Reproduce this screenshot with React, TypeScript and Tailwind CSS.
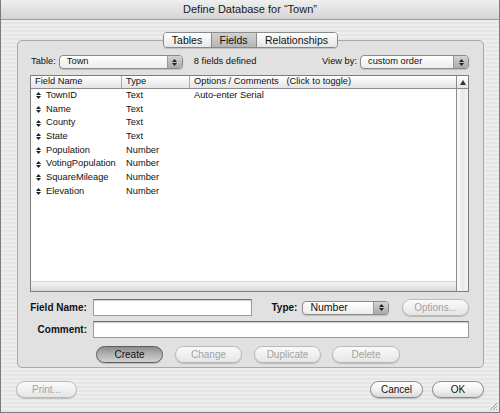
import React from 'react';

// Aqua-style "Define Database" dialog (FileMaker, Mac OS X)

const fields = [
  { name: 'TownID', type: 'Text', options: 'Auto-enter Serial' },
  { name: 'Name', type: 'Text', options: '' },
  { name: 'County', type: 'Text', options: '' },
  { name: 'State', type: 'Text', options: '' },
  { name: 'Population', type: 'Number', options: '' },
  { name: 'VotingPopulation', type: 'Number', options: '' },
  { name: 'SquareMileage', type: 'Number', options: '' },
  { name: 'Elevation', type: 'Number', options: '' },
];

function UpDown() {
  return (
    <svg width="5" height="7" viewBox="0 0 5 7" className="shrink-0">
      <polygon points="2.5,0 5,3 0,3" fill="#222" />
      <polygon points="0,4 5,4 2.5,7" fill="#222" />
    </svg>
  );
}

function Popup({ label, className, big }: { label: string; className: string; big?: boolean }) {
  return (
    <div
      className={`flex h-[14px] items-stretch overflow-hidden rounded-[4px] border border-[#8a8a8a] bg-gradient-to-b from-white to-[#ececec] shadow-[0_1px_1px_rgba(0,0,0,0.15)] ${className}`}
    >
      <div className={`flex flex-1 items-center pl-[7px] leading-none ${big ? 'text-[10.5px]' : 'text-[9.3px]'}`}>
        {label}
      </div>
      <div className="flex w-[15px] flex-col items-center justify-center gap-[1px] border-l border-[#9a9a9a] bg-gradient-to-b from-[#d4d4d4] to-[#a9a9a9]">
        <svg width="5" height="3" viewBox="0 0 5 3">
          <polygon points="2.5,0 5,3 0,3" fill="#222" />
        </svg>
        <svg width="5" height="3" viewBox="0 0 5 3">
          <polygon points="0,0 5,0 2.5,3" fill="#222" />
        </svg>
      </div>
    </div>
  );
}

function AquaButton({
  label,
  className,
  disabled,
  primary,
}: {
  label: string;
  className: string;
  disabled?: boolean;
  primary?: boolean;
}) {
  let tone =
    'border-[#8a8a8a] bg-gradient-to-b from-white via-[#f2f2f2] to-[#dadada] text-[#111]';
  if (disabled) tone = 'border-[#b9b9b9] bg-gradient-to-b from-[#fafafa] to-[#e6e6e6] text-[#a2a2a2]';
  if (primary) tone = 'border-[#5e5e5e] bg-gradient-to-b from-[#8c8c8c] via-[#b4b4b4] to-[#d0d0d0] text-[#111]';
  return (
    <div
      className={`flex h-[17px] items-center justify-center rounded-full border text-[10px] leading-none shadow-[0_1px_1px_rgba(0,0,0,0.18)] ${tone} ${className}`}
    >
      {label}
    </div>
  );
}

function TextInput({ className }: { className: string }) {
  return (
    <div
      className={`h-[17px] border border-[#9a9a9a] border-t-[#6f6f6f] bg-white shadow-[inset_0_1px_1px_rgba(0,0,0,0.2)] ${className}`}
    />
  );
}

export default function App() {
  return (
    <div className="relative flex h-[413px] w-[500px] flex-col overflow-hidden border-x border-b border-[#7a7a7a] bg-[repeating-linear-gradient(180deg,#ededed_0px,#ededed_2px,#e6e6e6_2px,#e6e6e6_4px)] font-['Liberation_Sans',Arial,sans-serif] text-[#111]">
      {/* Title bar */}
      <div className="flex h-[20px] shrink-0 items-center justify-center border-b border-[#9c9c9c] bg-gradient-to-b from-[#efefef] to-[#d4d4d4] text-[11px] leading-none text-[#1a1a1a]">
        Define Database for “Town”
      </div>

      {/* Tabs */}
      <div className="relative z-10 mt-[12px] flex h-[16px] shrink-0 justify-center">
        <div className="flex overflow-hidden rounded-[4px] border border-[#8a8a8a] text-[10.5px] leading-none shadow-[0_1px_1px_rgba(0,0,0,0.15)]">
          <div className="flex w-[47px] items-center justify-center bg-gradient-to-b from-white to-[#e6e6e6]">Tables</div>
          <div className="flex w-[46px] items-center justify-center border-x border-[#8a8a8a] bg-gradient-to-b from-[#d2d2d2] to-[#b6b6b6]">
            Fields
          </div>
          <div className="flex w-[80px] items-center justify-center bg-gradient-to-b from-white to-[#e6e6e6]">
            Relationships
          </div>
        </div>
      </div>

      {/* Group box */}
      <div className="mt-[-8px] ml-[16px] flex h-[328px] w-[467px] shrink-0 flex-col rounded-[5px] border border-[#a9a9a9] bg-[#e1e1e1] pt-[14px] pr-[14px] pl-[12px]">
        {/* Table / view by */}
        <div className="flex h-[14px] items-center text-[9.3px] leading-none">
          <span className="ml-[1px]">Table:</span>
          <Popup label="Town" className="ml-[3px] w-[124px]" />
          <span className="ml-[11px]">8 fields defined</span>
          <div className="flex-1" />
          <span>View by:</span>
          <Popup label="custom order" className="ml-[3px] w-[109px]" />
        </div>

        {/* Field list */}
        <div className="mt-[6px] flex h-[217px] border border-[#7c7c7c] bg-white">
          <div className="flex flex-1 flex-col">
            <div className="flex h-[13px] border-b border-[#8c8c8c] bg-gradient-to-b from-white to-[#e4e4e4] text-[9.3px] leading-none">
              <div className="flex w-[91px] items-center border-r border-[#a8a8a8] pl-[4px]">Field Name</div>
              <div className="flex w-[68px] items-center border-r border-[#a8a8a8] pl-[4px]">Type</div>
              <div className="flex flex-1 items-center pl-[4px] whitespace-pre">
                {'Options / Comments   (Click to toggle)'}
              </div>
            </div>
            {fields.map((f) => (
              <div key={f.name} className="flex h-[13.66px] items-center text-[9.3px] leading-none">
                <div className="flex w-[91px] items-center pl-[5px]">
                  <UpDown />
                  <span className="ml-[5px]">{f.name}</span>
                </div>
                <div className="w-[68px] pl-[4px]">{f.type}</div>
                <div className="flex-1 pl-[4px]">{f.options}</div>
              </div>
            ))}
            <div className="flex-1" />
            <div className="h-[10px] border-t border-[#d4d4d4] bg-gradient-to-b from-[#f6f6f6] to-[#d9d9d9]" />
          </div>
          {/* Scroll bar */}
          <div className="flex w-[12px] flex-col border-l border-[#8c8c8c]">
            <div className="flex h-[13px] items-center justify-center border-b border-[#8c8c8c] bg-gradient-to-b from-white to-[#e4e4e4]">
              <svg width="6" height="5" viewBox="0 0 6 5">
                <polygon points="3,0 6,5 0,5" fill="#333" />
              </svg>
            </div>
            <div className="flex-1 bg-gradient-to-r from-[#fbfbfb] via-[#e9e9e9] to-[#f3f3f3]" />
          </div>
        </div>

        {/* Field Name / Type / Options */}
        <div className="mt-[7px] flex h-[17px] items-center">
          <span className="w-[57px] text-right text-[10px] leading-none font-bold">Field Name:</span>
          <TextInput className="ml-[6px] w-[160px]" />
          <span className="ml-[19px] text-[10px] leading-none font-bold">Type:</span>
          <Popup label="Number" big className="ml-[5px] w-[87px]" />
          <AquaButton label="Options..." disabled className="ml-[13px] w-[67px]" />
        </div>

        {/* Comment */}
        <div className="mt-[5px] flex h-[17px] items-center">
          <span className="w-[57px] text-right text-[10px] leading-none font-bold">Comment:</span>
          <TextInput className="ml-[6px] flex-1" />
        </div>

        {/* Action buttons */}
        <div className="mt-[8px] flex h-[17px] items-center">
          <AquaButton label="Create" primary className="ml-[66px] w-[67px]" />
          <AquaButton label="Change" disabled className="ml-[12px] w-[67px]" />
          <AquaButton label="Duplicate" disabled className="ml-[12px] w-[67px]" />
          <AquaButton label="Delete" disabled className="ml-[11px] w-[68px]" />
        </div>
      </div>

      {/* Footer */}
      <div className="mt-[13px] flex h-[17px] shrink-0 items-center px-[15px]">
        <AquaButton label="Print..." disabled className="w-[61px]" />
        <div className="flex-1" />
        <AquaButton label="Cancel" className="w-[53px]" />
        <AquaButton label="OK" className="ml-[9px] w-[52px]" />
      </div>

      {/* Resize grip */}
      <svg width="10" height="10" viewBox="0 0 10 10" className="absolute right-[1px] bottom-[1px]">
        <line x1="9" y1="2" x2="2" y2="9" stroke="#9a9a9a" strokeWidth="1" />
        <line x1="9" y1="5" x2="5" y2="9" stroke="#9a9a9a" strokeWidth="1" />
        <line x1="9" y1="8" x2="8" y2="9" stroke="#9a9a9a" strokeWidth="1" />
      </svg>
    </div>
  );
}
